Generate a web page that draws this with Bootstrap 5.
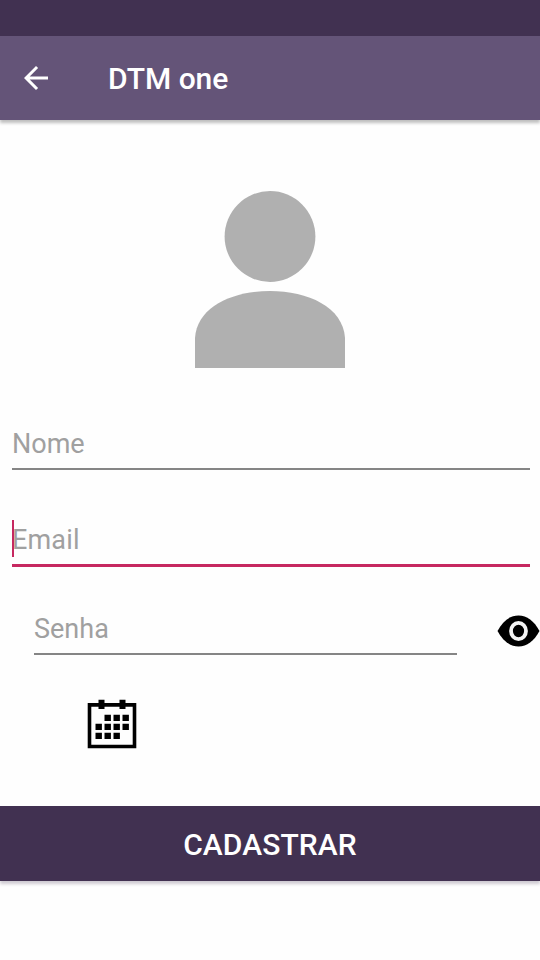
<!DOCTYPE html>
<html lang="pt-BR">
<head>
<meta charset="utf-8">
<meta name="viewport" content="width=device-width, initial-scale=1">
<title>DTM one</title>
<link href="https://cdn.jsdelivr.net/npm/bootstrap@5.3.0/dist/css/bootstrap.min.css" rel="stylesheet">
<style>
body { font-family: Roboto, sans-serif; background: #fefefe; height: 960px; overflow: hidden; }
.status-strip { height: 36px; background: #413151; }
.app-bar { height: 84px; background: #645478; padding: 0 18px; box-shadow: 0 3px 3px rgba(0,0,0,.25); }
.back-btn { width: 36px; height: 36px; }
.app-title { font-size: 30px; font-weight: 500; line-height: 36px; margin-left: 54px; padding-top: 2px; letter-spacing: -.05px; }
.avatar { width: 150px; height: 178px; margin-top: 71px; }
.field { height: 60px; margin: 0 10px 0 12px; }
.field .form-control { font-size: 27px; line-height: 36px; color: #222; height: 100%; padding: 14px 0 4px; border-bottom: 2px solid #858585; }
.field .form-control::placeholder { color: #a0a0a0; opacity: 1; }
.field .form-control:focus { box-shadow: none; }
.field-name { margin-top: 41px; }
.field-email { margin-top: 37px; }
.field-email .form-control { padding: 13px 0 4px; border-bottom: 3px solid #c62860; letter-spacing: .15px; }
.text-caret { left: 0; top: 13px; width: 2px; height: 37px; background: #c62860; }
.password-row { margin-top: 28px; height: 60px; }
.field-password { width: 423px; margin: 0 0 0 34px; }
.eye-btn { width: 44px; height: 34px; margin-top: 19px; }
.date-btn { width: 50px; height: 50px; margin: 44px 0 0 87px; }
.submit-btn { height: 75px; margin-top: 57px; padding: 2px 0 0; background: #413151; font-size: 30px; font-weight: 500; letter-spacing: .1px; box-shadow: 0 3px 3px rgba(65,49,81,.25); }
.submit-btn:hover { background: #413151; }
</style>
<script src="https://cdn.jsdelivr.net/npm/bootstrap@5.3.0/dist/js/bootstrap.bundle.min.js"></script>
</head>
<body>
<div class="status-strip"></div>
<header class="app-bar d-flex align-items-center text-white">
  <button type="button" class="back-btn btn p-0 border-0 d-flex" aria-label="Voltar">
    <svg width="36" height="36" viewBox="0 0 24 24" fill="#fff"><path d="M20 11H7.800l5.600-5.600L12 4l-8 8 8 8 1.400-1.400L7.800 13H20z"/></svg>
  </button>
  <h1 class="app-title mb-0">DTM one</h1>
</header>
<main class="d-flex flex-column">
  <svg class="avatar mx-auto flex-shrink-0" viewBox="0 0 150 178" fill="#b0b0b0"><circle cx="75" cy="45.5" r="45.4"/><path d="M0 177V147C2 116 37 100 75 100s73 16 75 47v30z"/></svg>
  <div class="field field-name">
    <input class="form-control bg-transparent border-top-0 border-start-0 border-end-0 rounded-0" type="text" placeholder="Nome" aria-label="Nome">
  </div>
  <div class="field field-email position-relative">
    <input class="form-control bg-transparent border-top-0 border-start-0 border-end-0 rounded-0" type="email" placeholder="Email" aria-label="Email">
    <span class="text-caret position-absolute"></span>
  </div>
  <div class="password-row d-flex justify-content-between">
    <div class="field field-password">
      <input class="form-control bg-transparent border-top-0 border-start-0 border-end-0 rounded-0" type="password" placeholder="Senha" aria-label="Senha">
    </div>
    <button type="button" class="eye-btn btn p-0 border-0 d-flex" aria-label="Mostrar senha">
      <svg width="44" height="34" viewBox="0 0 44 34"><path d="M1.500 17C7 7 14 1.500 22.500 1.500S38 7 43.500 17C38 27 31 32.500 22.500 32.500S7 27 1.500 17z"/><ellipse cx="22.500" cy="17" rx="7.500" ry="8.200" stroke="#f4f4f4" stroke-width="3.800"/></svg>
    </button>
  </div>
  <button type="button" class="date-btn btn p-0 border-0 d-flex" aria-label="Escolher data">
    <svg width="50" height="50" viewBox="0 0 50 50"><path d="M2.500 5.900h45v41.600h-45z" fill="none" stroke="#000" stroke-width="3.600"/><path d="M11.500 .8h6v9.200h-6zM32.500 .8h6v9.200h-6zM17.500 15.800h6.400v6.300h-6.400zm9 0h6.400v6.300h-6.400zm9 0h6.400v6.300h-6.400zM8.500 24.800h6.400v6.300H8.500zm9 0h6.400v6.300h-6.400zm9 0h6.400v6.300h-6.400zm9 0h6.400v6.300h-6.400zM8.500 33.800h6.400v6.300H8.500zm9 0h6.400v6.300h-6.400zm9 0h6.400v6.300h-6.400z"/></svg>
  </button>
  <button type="button" class="submit-btn btn w-100 text-white border-0 rounded-0">CADASTRAR</button>
</main>
</body>
</html>
